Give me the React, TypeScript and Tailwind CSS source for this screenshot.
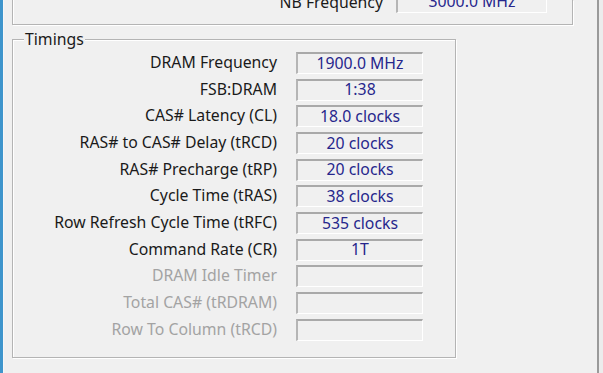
import React from "react";

const rows: { label: string; value: string; disabled?: boolean }[] = [
  { label: "DRAM Frequency", value: "1900.0 MHz" },
  { label: "FSB:DRAM", value: "1:38" },
  { label: "CAS# Latency (CL)", value: "18.0 clocks" },
  { label: "RAS# to CAS# Delay (tRCD)", value: "20 clocks" },
  { label: "RAS# Precharge (tRP)", value: "20 clocks" },
  { label: "Cycle Time (tRAS)", value: "38 clocks" },
  { label: "Row Refresh Cycle Time (tRFC)", value: "535 clocks" },
  { label: "Command Rate (CR)", value: "1T" },
  { label: "DRAM Idle Timer", value: "", disabled: true },
  { label: "Total CAS# (tRDRAM)", value: "", disabled: true },
  { label: "Row To Column (tRCD)", value: "", disabled: true },
];

function ValueBox({ children, className = "" }: { children?: React.ReactNode; className?: string }) {
  return (
    <div
      className={
        "flex items-center justify-center border-t-2 border-l-2 border-t-[#a9a9a9] border-l-[#b5b5b5] border-r border-b border-r-white border-b-white bg-[#f0f0f0] text-[#26268c] " +
        className
      }
    >
      {children}
    </div>
  );
}

export default function App() {
  return (
    <div className="w-[603px] h-[373px] overflow-hidden bg-[#f0f0f0] flex font-['Noto_Sans',sans-serif] text-[15.8px] text-[#1a1a1a]">
      <div className="w-[3px] h-full bg-[#3f95cc]" />
      <div className="w-px h-full bg-[#f7f7f7]" />
      <div className="flex-1 flex flex-col pl-[8px]">
        {/* NB frequency group (cut off at top) */}
        <div className="w-[561px] h-[25px] border-l border-r border-b border-[#b4b4b4] shadow-[inset_1px_0_0_white,1px_1px_0_white] flex items-start">
          <div className="w-[370px] h-[13px] flex items-center justify-end leading-none">
            <span className="mt-[-8px]">NB Frequency</span>
          </div>
          <div className="ml-[13px] w-[151px] h-[13px] flex items-end border-l-2 border-l-[#b5b5b5] border-b border-b-white border-r border-r-white">
            <div className="w-full h-[13px] flex items-center justify-center text-[#26268c] leading-none">
              <span className="mt-[-8px]">3000.0 MHz</span>
            </div>
          </div>
        </div>

        {/* Timings group */}
        <div className="relative mt-[14px] w-[444px] h-[319px] border border-[#b4b4b4] shadow-[inset_1px_1px_0_white,1px_1px_0_white]">
          <div className="absolute left-[11px] top-[-11px] px-[1px] bg-[#f0f0f0] leading-[20px]">Timings</div>
          <div className="pt-[12px] grid grid-cols-[264px_127px] gap-x-[19px] auto-rows-[26.67px]">
            {rows.map((r) => (
              <React.Fragment key={r.label}>
                <div
                  className={
                    "h-[22px] flex items-center justify-end leading-none whitespace-nowrap " +
                    (r.disabled ? "text-[#a3a3a3]" : "")
                  }
                >
                  {r.label}
                </div>
                <ValueBox className="h-[22px] leading-none">{r.value}</ValueBox>
              </React.Fragment>
            ))}
          </div>
        </div>
      </div>
      <div className="w-[2px] h-full bg-[#9a9a9a]" />
      <div className="w-[4px] h-full bg-[#ececec]" />
    </div>
  );
}
